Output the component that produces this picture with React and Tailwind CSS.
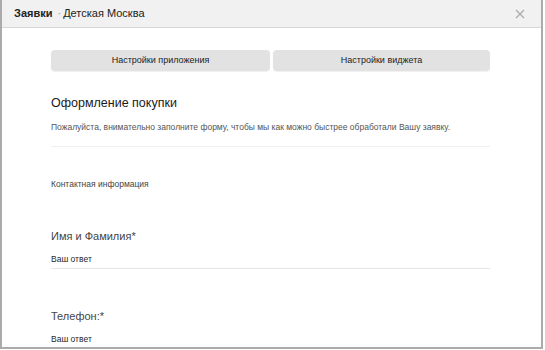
import React from "react";

const Field = ({ label, first }) => (
  <div className={first ? "mt-[39px]" : "mt-[40px]"}>
    <div className="text-[11px] leading-[14px] text-[#444]">{label}</div>
    <div className="mt-[10px] pb-[3px] border-b border-[#e6e6e6] text-[8.5px] leading-[12px] text-[#1f1f1f]">
      Ваш ответ
    </div>
  </div>
);

export default function App() {
  return (
    <div
      className="w-[543px] h-[349px] overflow-hidden bg-white border-l-2 border-r-2 border-b-2 border-[#ababab]"
      style={{ fontFamily: '"Liberation Sans", Arial, sans-serif' }}
    >
      {/* header */}
      <div className="h-[28px] bg-[#f1f1f1] border-b border-[#d6d6d6] flex items-center pl-[12px] pr-[16px]">
        <span className="text-[11px] font-semibold text-[#222]">Заявки</span>
        <span className="text-[11px] text-[#999] ml-[5px]">·</span>
        <span className="text-[11px] text-[#222] ml-[2px]">Детская Москва</span>
        <span className="ml-auto text-[#aaa]">
          <svg width="10" height="10" viewBox="0 0 10 10" stroke="currentColor" strokeWidth="1.2">
            <path d="M1 1 L9 9 M9 1 L1 9" />
          </svg>
        </span>
      </div>

      <div className="pl-[49px] w-[488px] pt-[22px]">
        <div className="grid grid-cols-[219px_217px] gap-[3px]">
          <button className="h-[21px] rounded-[4px] bg-[#e2e2e2] shadow-[0_1px_1px_rgba(0,0,0,0.06)] text-[9px] text-[#222]">Настройки приложения</button>
          <button className="h-[21px] rounded-[4px] bg-[#e2e2e2] shadow-[0_1px_1px_rgba(0,0,0,0.06)] text-[9px] text-[#222]">Настройки виджета</button>
        </div>

        <h1 className="mt-[24px] text-[12.5px] leading-[16px] text-[#1a1a1a]">Оформление покупки</h1>
        <p className="mt-[10px] text-[8.5px] leading-[12px] text-[#555]">
          Пожалуйста, внимательно заполните форму, чтобы мы как можно быстрее обработали Вашу заявку.
        </p>
        <div className="mt-[13px] h-px bg-[#efefef]" />

        <div className="mt-[31px] text-[8.5px] leading-[12px] text-[#444]">Контактная информация</div>

        <Field label="Имя и Фамилия*" first />
        <Field label="Телефон:*" />
      </div>
    </div>
  );
}
